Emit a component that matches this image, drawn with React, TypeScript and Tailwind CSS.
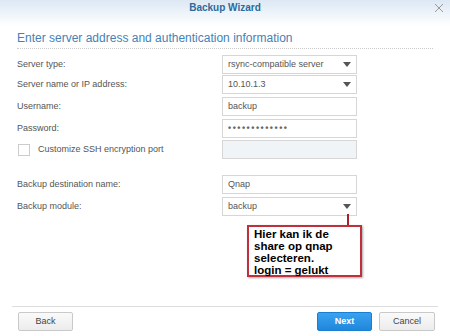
const FONT = "font-['Liberation_Sans',Arial,sans-serif]";

function Arrow() {
  return (
    <svg width="8" height="5" viewBox="0 0 8 5" className="shrink-0">
      <path d="M0 0 L8 0 L4 5 Z" fill="#555" />
    </svg>
  );
}

function Field({
  value,
  select,
  disabled,
  secret,
  className = "",
}: {
  value?: string;
  select?: boolean;
  disabled?: boolean;
  secret?: boolean;
  className?: string;
}) {
  return (
    <div
      className={`flex items-center justify-between w-[135px] h-[19px] border border-[#d6d6d6] px-[5px] text-[9px] text-[#555] ${
        disabled ? "bg-[#f1f4f7]" : "bg-white"
      } ${className}`}
    >
      <span className={secret ? "tracking-[1.5px] text-[9px] font-bold text-[#666]" : ""}>{value}</span>
      {select && <Arrow />}
    </div>
  );
}

function Row({ label, children, className = "" }: { label: React.ReactNode; children: React.ReactNode; className?: string }) {
  return (
    <div className={`flex items-center ${className}`}>
      <div className="w-[205px] text-[9px] text-[#555]">{label}</div>
      {children}
    </div>
  );
}

export default function App() {
  return (
    <div className={`relative w-[450px] h-[336px] bg-white overflow-hidden ${FONT}`}>
      {/* header */}
      <div className="relative h-[26px] bg-gradient-to-b from-[#dce8f4] to-white flex items-center justify-center">
        <span className="text-[10px] font-bold text-[#2c6a9c] -mt-[11px]">Backup Wizard</span>
        <svg width="10" height="10" viewBox="0 0 10 10" className="absolute right-[6px] top-[3px]">
          <path d="M1 1 L9 9 M9 1 L1 9" stroke="#999" strokeWidth="1" />
        </svg>
      </div>

      <div className="px-[17px]">
        <div className="mt-[5px] text-[12px] text-[#4581b6] leading-[14px]">
          Enter server address and authentication information
        </div>
        <div className="mt-[3px] border-t border-dotted border-[#ccc]" />

        <div className="mt-[6px] flex flex-col">
          <Row label="Server type:">
            <Field value="rsync-compatible server" select />
          </Row>
          <Row label="Server name or IP address:" className="mt-[1px]">
            <Field value="10.10.1.3" select />
          </Row>
          <Row label="Username:" className="mt-[3px]">
            <Field value="backup" />
          </Row>
          <Row label="Password:" className="mt-[3px]">
            <Field value="•••••••••••••" secret />
          </Row>
          <Row
            className="mt-[2px]"
            label={
              <div className="flex items-center">
                <div className="w-[12px] h-[12px] border border-[#ccc] bg-white ml-[1px] mr-[8px]" />
                <span>Customize SSH encryption port</span>
              </div>
            }
          >
            <Field disabled />
          </Row>

          <Row label="Backup destination name:" className="mt-[16px]">
            <Field value="Qnap" />
          </Row>
          <Row label="Backup module:" className="mt-[3px]">
            <Field value="backup" select />
          </Row>
        </div>
      </div>

      {/* annotation */}
      <div className="absolute left-[347px] top-[214px] w-[2px] h-[12px] bg-[#a8202c]" />
      <div className="absolute left-[247px] top-[225px] w-[115px] h-[52px] border-2 border-[#c0303c] bg-white shadow-[1px_1px_2px_rgba(0,0,0,0.35)] px-[5px] pt-[1px] text-[11.5px] leading-[12px] font-bold text-black font-['Liberation_Sans',Arial,sans-serif]">
        Hier kan ik de
        <br />
        share op qnap
        <br />
        selecteren.
        <br />
        login = gelukt
      </div>

      {/* footer */}
      <div className="absolute left-0 right-0 top-[306px] px-[12px]">
        <div className="border-t border-[#ddd]" />
        <div className="flex items-center justify-between mt-[5px] px-[6px] pr-[3px]">
          <button className="w-[55px] h-[19px] rounded-[2px] border border-[#c9c9c9] bg-gradient-to-b from-[#fafafa] to-[#ececec] text-[9px] text-[#444]">
            Back
          </button>
          <div className="flex gap-[7px]">
            <button className="w-[55px] h-[19px] rounded-[2px] border border-[#1a7fd0] bg-gradient-to-b from-[#3aa2f0] to-[#1f87db] text-[9px] font-bold text-white">
              Next
            </button>
            <button className="w-[56px] h-[19px] rounded-[2px] border border-[#c9c9c9] bg-gradient-to-b from-[#fafafa] to-[#ececec] text-[9px] text-[#444]">
              Cancel
            </button>
          </div>
        </div>
      </div>
    </div>
  );
}
